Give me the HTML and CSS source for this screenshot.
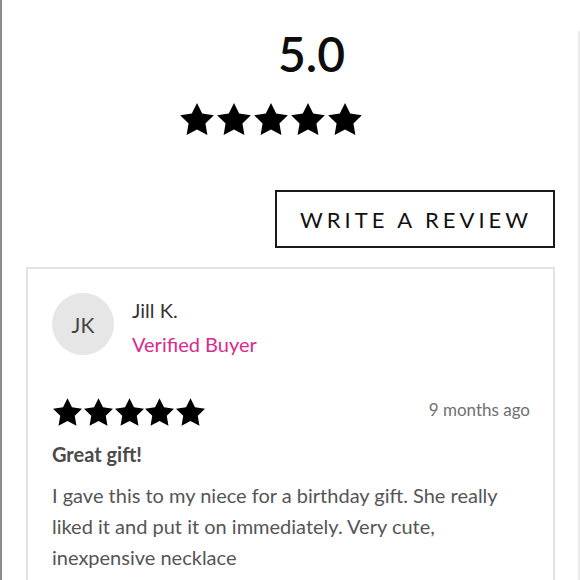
FILE: index.html
```html
<!DOCTYPE html>
<html>
<head>
<meta charset="utf-8">
<link rel="stylesheet" href="styles.css">
</head>
<body>
<div class="page">
  <div class="summary">
    <div class="score">5.0</div>
    <div class="stars big">
      <svg viewBox="2 2 20 19"><polygon points="12,2 15.09,8.26 22,9.27 17,14.14 18.18,21.02 12,17.77 5.82,21.02 7,14.14 2,9.27 8.91,8.26"/></svg>
      <svg viewBox="2 2 20 19"><polygon points="12,2 15.09,8.26 22,9.27 17,14.14 18.18,21.02 12,17.77 5.82,21.02 7,14.14 2,9.27 8.91,8.26"/></svg>
      <svg viewBox="2 2 20 19"><polygon points="12,2 15.09,8.26 22,9.27 17,14.14 18.18,21.02 12,17.77 5.82,21.02 7,14.14 2,9.27 8.91,8.26"/></svg>
      <svg viewBox="2 2 20 19"><polygon points="12,2 15.09,8.26 22,9.27 17,14.14 18.18,21.02 12,17.77 5.82,21.02 7,14.14 2,9.27 8.91,8.26"/></svg>
      <svg viewBox="2 2 20 19"><polygon points="12,2 15.09,8.26 22,9.27 17,14.14 18.18,21.02 12,17.77 5.82,21.02 7,14.14 2,9.27 8.91,8.26"/></svg>
    </div>
  </div>
  <div class="actions">
    <button class="write-btn">WRITE A REVIEW</button>
  </div>
  <div class="card">
    <div class="author">
      <div class="avatar">JK</div>
      <div class="author-info">
        <div class="name">Jill K.</div>
        <div class="verified">Verified Buyer</div>
      </div>
    </div>
    <div class="meta">
      <div class="stars small">
        <svg viewBox="2 2 20 19"><polygon points="12,2 15.09,8.26 22,9.27 17,14.14 18.18,21.02 12,17.77 5.82,21.02 7,14.14 2,9.27 8.91,8.26"/></svg>
        <svg viewBox="2 2 20 19"><polygon points="12,2 15.09,8.26 22,9.27 17,14.14 18.18,21.02 12,17.77 5.82,21.02 7,14.14 2,9.27 8.91,8.26"/></svg>
        <svg viewBox="2 2 20 19"><polygon points="12,2 15.09,8.26 22,9.27 17,14.14 18.18,21.02 12,17.77 5.82,21.02 7,14.14 2,9.27 8.91,8.26"/></svg>
        <svg viewBox="2 2 20 19"><polygon points="12,2 15.09,8.26 22,9.27 17,14.14 18.18,21.02 12,17.77 5.82,21.02 7,14.14 2,9.27 8.91,8.26"/></svg>
        <svg viewBox="2 2 20 19"><polygon points="12,2 15.09,8.26 22,9.27 17,14.14 18.18,21.02 12,17.77 5.82,21.02 7,14.14 2,9.27 8.91,8.26"/></svg>
      </div>
      <div class="date">9 months ago</div>
    </div>
    <div class="title">Great gift!</div>
    <div class="body">I gave this to my niece for a birthday gift. She really liked it and put it on immediately. Very cute, inexpensive necklace</div>
  </div>
</div>
</body>
</html>
```

FILE: styles.css
```css
html, body {
  margin: 0;
  padding: 0;
  background: #fff;
  overflow: hidden;
}
body {
  font-family: Lato, "Open Sans", sans-serif;
  color: #333;
}
.page {
  position: relative;
  box-sizing: border-box;
  height: 580px;
  border-left: 2px solid #8c8c8c;
  padding: 0 0 0 24px;
}
.page::after {
  content: "";
  position: absolute;
  left: 576px;
  top: 31px;
  width: 2px;
  bottom: 0;
  background: #ececec;
}
.summary {
  display: flex;
  flex-direction: column;
  align-items: flex-start;
}
.score {
  margin: 30px 0 0 252px;
  font-size: 48px;
  font-weight: 600;
  line-height: 48px;
  color: #0d0d0d;
}
.stars {
  display: flex;
}
.stars svg {
  fill: #000;
  display: block;
}
.stars.big {
  margin: 25px 0 0 154px;
  gap: 3px;
}
.stars.big svg {
  width: 34px;
  height: 32px;
}
.actions {
  display: flex;
  justify-content: flex-end;
  width: 529px;
  margin-top: 55px;
}
.write-btn {
  box-sizing: border-box;
  width: 280px;
  height: 58px;
  border: 2px solid #1a1a1a;
  background: #fff;
  font-family: Lato, sans-serif;
  font-size: 22px;
  letter-spacing: 4px;
  color: #111;
  padding: 0 0 0 2px;
  text-align: center;
}
.card {
  box-sizing: border-box;
  width: 529px;
  margin-top: 19px;
  border: 2px solid #e2e2e2;
  border-bottom: none;
  height: 400px;
  padding: 24px 23px 0 24px;
}
.author {
  display: flex;
  gap: 18px;
}
.avatar {
  width: 62px;
  height: 62px;
  border-radius: 50%;
  background: #e6e6e6;
  color: #444;
  font-size: 21px;
  display: flex;
  align-items: center;
  justify-content: center;
  flex: none;
}
.author-info {
  font-size: 20px;
  line-height: 34px;
}
.name {
  color: #333;
}
.verified {
  color: #d82a8f;
}
.meta {
  display: flex;
  justify-content: space-between;
  align-items: flex-start;
  margin-top: 37px;
}
.stars.small {
  gap: 1.75px;
  margin-left: 1px;
}
.stars.small svg {
  width: 29px;
  height: 28px;
}
.date {
  font-size: 17px;
  line-height: 20px;
  color: #707070;
  margin-top: 2px;
}
.title {
  font-size: 20px;
  font-weight: 700;
  line-height: 24px;
  color: #4a4a4a;
  margin-top: 16px;
}
.body {
  font-size: 20px;
  line-height: 31px;
  color: #555;
  margin-top: 14px;
  padding-right: 10px;
}
```
